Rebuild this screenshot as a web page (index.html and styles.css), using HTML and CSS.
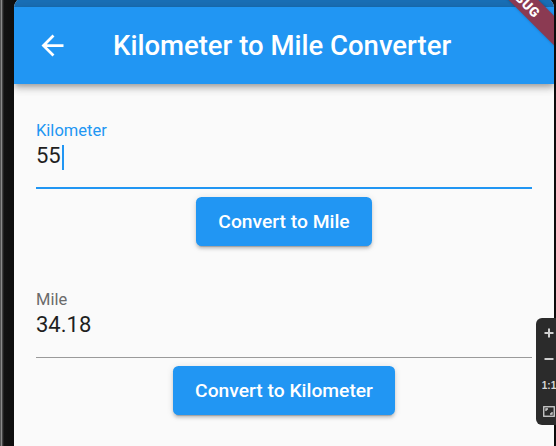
FILE: index.html
```html
<!DOCTYPE html>
<html lang="en">
<head>
<meta charset="utf-8">
<title>Kilometer to Mile Converter</title>
<link rel="stylesheet" href="styles.css">
</head>
<body>
<div class="device">
  <div class="bezel-left"></div>
  <div class="screen">
    <div class="statusbar"></div>
    <header class="appbar">
      <div class="leading">
        <svg viewBox="0 0 24 24" aria-hidden="true"><path d="M20 11H7.83l5.59-5.59L12 4l-8 8 8 8 1.41-1.41L7.83 13H20v-2z"/></svg>
      </div>
      <h1 class="title">Kilometer to Mile Converter</h1>
    </header>
    <main class="content">
      <div class="field focused">
        <label class="field-label">Kilometer</label>
        <div class="field-input">55<span class="cursor"></span></div>
        <div class="field-line"></div>
      </div>
      <div class="btn-wrap"><button class="btn">Convert to Mile</button></div>
      <div class="field">
        <label class="field-label">Mile</label>
        <div class="field-input">34.18</div>
        <div class="field-line"></div>
      </div>
      <div class="btn-wrap"><button class="btn">Convert to Kilometer</button></div>
    </main>
    <div class="debug-banner"><span>DEBUG</span></div>
  </div>
  <div class="bezel-right"></div>
  <div class="emu-toolbar">
    <div class="emu-item"><svg viewBox="0 0 10 10"><path d="M5 0.5v9M0.5 5h9"/></svg></div>
    <div class="emu-item"><svg viewBox="0 0 10 10"><path d="M0.5 5h9"/></svg></div>
    <div class="emu-item emu-text">1:1</div>
    <div class="emu-item"><svg viewBox="0 0 12 11" class="emu-fit"><rect x="0.75" y="0.75" width="10.5" height="9.5"/><path d="M3 5V3h2M9 6v2H7"/></svg></div>
  </div>
</div>
</body>
</html>
```

FILE: styles.css
```css
html, body {
  margin: 0;
  height: 100%;
}
body {
  background: #0c0c0c;
  overflow: hidden;
  font-family: Roboto, "Noto Sans", sans-serif;
}
.device {
  display: flex;
  height: 446px;
  position: relative;
}
.bezel-left {
  width: 14px;
  flex: none;
  background: linear-gradient(to right, #555 0, #555 1px, #8a8a8a 1px, #8a8a8a 2px, #444 2px, #444 3px, #222 3px, #222 4px, #121212 4px, #0e0e0e 14px);
}
.bezel-right {
  width: 2px;
  flex: none;
  background: #0c0c0c;
}
.screen {
  width: 540px;
  flex: none;
  margin-top: -3px;
  height: 449px;
  border-radius: 11px 11px 0 0;
  overflow: hidden;
  background: #fafafa;
  position: relative;
  display: flex;
  flex-direction: column;
}
.statusbar {
  height: 10px;
  flex: none;
  background: #1970b8;
}
.appbar {
  height: 77px;
  flex: none;
  background: #2196f3;
  display: flex;
  align-items: center;
  position: relative;
  z-index: 1;
  box-shadow: 0 3px 5px -1px rgba(0,0,0,0.2), 0 5px 7px 0 rgba(0,0,0,0.14), 0 1px 12px 0 rgba(0,0,0,0.12);
}
.leading {
  width: 77px;
  height: 77px;
  flex: none;
  display: flex;
  align-items: center;
  justify-content: center;
}
.leading svg {
  width: 33px;
  height: 33px;
  fill: #fff;
}
.title {
  margin: 0 0 0 22px;
  font-size: 27.5px;
  font-weight: 500;
  color: #fff;
  white-space: nowrap;
}
.content {
  padding: 22px 22px 0;
  display: flex;
  flex-direction: column;
}
.field {
  display: flex;
  flex-direction: column;
}
.field-label {
  font-size: 16.5px;
  line-height: 20px;
  margin-top: 15px;
  color: #6b6b6b;
}
.field.focused .field-label {
  color: #2196f3;
}
.field-input {
  font-size: 22px;
  line-height: 26px;
  height: 26px;
  margin-top: 2px;
  color: #1f1f1f;
  white-space: nowrap;
}
.cursor {
  display: inline-block;
  width: 2px;
  height: 25px;
  margin-left: 1px;
  background: #2196f3;
  vertical-align: -7px;
}
.field-line {
  margin-top: 18.5px;
  height: 1px;
  background: #9a9a9a;
}
.field.focused .field-line {
  margin-top: 17.5px;
  height: 2px;
  background: #2196f3;
}
.btn-wrap {
  display: flex;
  justify-content: center;
  padding: 8px 0;
  margin-bottom: 21px;
}
.btn {
  height: 49.5px;
  padding: 0 22px;
  border: none;
  border-radius: 5.5px;
  background: #2196f3;
  color: #fff;
  font-family: Roboto, "Noto Sans", sans-serif;
  font-size: 19.25px;
  font-weight: 500;
  box-shadow: 0 4px 1px -3px rgba(0,0,0,0.2), 0 3px 3px 0 rgba(0,0,0,0.14), 0 1px 7px 0 rgba(0,0,0,0.12);
}
.debug-banner {
  position: absolute;
  left: 428px;
  top: -9.5px;
  width: 160px;
  height: 21px;
  background: #8b3a52;
  transform: rotate(45deg);
  display: flex;
  align-items: center;
  justify-content: center;
  z-index: 2;
  box-shadow: 0 0 3px rgba(0,0,0,0.25);
}
.debug-banner span {
  color: #fff;
  font-size: 13.5px;
  font-weight: 900;
  letter-spacing: 0.5px;
}
.emu-toolbar {
  position: absolute;
  left: 536px;
  top: 318px;
  width: 26px;
  height: 107px;
  padding-top: 2px;
  box-sizing: border-box;
  background: #2b2b2b;
  border-radius: 6px;
  display: flex;
  flex-direction: column;
  z-index: 3;
}
.emu-item {
  height: 26px;
  display: flex;
  align-items: center;
  justify-content: center;
}
.emu-item svg {
  width: 10px;
  height: 10px;
  stroke: #d0d0d0;
  stroke-width: 2;
  fill: none;
}
.emu-item svg.emu-fit {
  width: 12px;
  height: 11px;
  stroke-width: 1.3;
}
.emu-text {
  color: #d8d8d8;
  font-size: 10px;
  font-weight: 700;
  font-family: "Liberation Sans", Arial, sans-serif;
}
```
